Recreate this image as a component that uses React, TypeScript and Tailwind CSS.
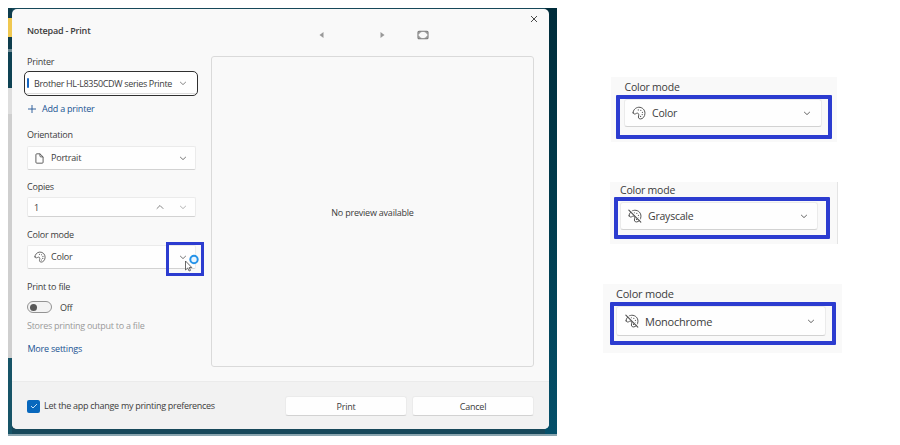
import type { ReactNode } from "react";

function Chevron({ up = false, className = "" }: { up?: boolean; className?: string }) {
  return (
    <svg viewBox="0 0 8 8" className={`h-2 w-2 shrink-0 ${className}`} fill="none" stroke="currentColor" strokeWidth="0.9" strokeLinecap="round" strokeLinejoin="round">
      <path d={up ? "M1 5.500 4 2.500 7 5.500" : "M1.400 3.200 4 5.600 6.600 3.200"} />
    </svg>
  );
}

function Palette({ off = false, className = "" }: { off?: boolean; className?: string }) {
  return (
    <svg viewBox="0 0 20 20" className={`shrink-0 text-[#505050] ${className}`} fill="none" stroke="currentColor" strokeWidth="1.400" strokeLinecap="round" strokeLinejoin="round">
      <path d="M1.600 9.800C1.200 6.200 5 2 9.600 1.800c5.200-.2 9 3.800 8.900 8.600 0 4.700-3.200 8.200-6.600 8.100-2.600-.1-3.200-2.200-2.500-4.300.6-1.900.3-3.200-.9-3.800-1.300-.6-2.200.2-3.400.8C3.500 11.800 1.800 11.300 1.600 9.800Z" />
      <g fill="currentColor" stroke="none">
        <circle cx="9" cy="5.600" r="0.900" />
        <circle cx="12.600" cy="6.200" r="0.900" />
        <circle cx="14.900" cy="9" r="0.900" />
        <circle cx="14.600" cy="12.300" r="0.900" />
        <circle cx="12.300" cy="14.900" r="0.900" />
      </g>
      {off && (
        <>
          <path d="M2.800 .8 19.300 17.300" stroke="#fdfdfd" strokeWidth="1.500" />
          <path d="M1.200 1.700 18.300 18.800" strokeWidth="1.600" />
        </>
      )}
    </svg>
  );
}

function Label({ children, className = "" }: { children: ReactNode; className?: string }) {
  return <div className={`flex h-4 items-center pb-px ${className}`}>{children}</div>;
}

const field = "flex items-center rounded-[2px] border border-[#ebebeb] border-b-[#d2d2d2] bg-[#fefefe]";

function Backdrop() {
  return (
    <div className="flex h-full w-full justify-between">
      <div className="flex w-1 flex-col">
        <div className="h-[10px] bg-[#0e3d4d]" />
        <div className="h-[19px] bg-[#f0c850]" />
        <div className="h-[12px] bg-[#0e3d4d]" />
        <div className="h-[3px] bg-[#6c8993]" />
        <div className="h-[36px] bg-[#0e4253]" />
        <div className="h-[26px] bg-[#dedede]" />
        <div className="h-[244px] bg-[#cfcfcf]" />
        <div className="flex-1 bg-[#175467]" />
      </div>
      <div className="w-3 bg-linear-to-b from-[#002c3a] via-[#003c4e] to-[#05506a]" />
    </div>
  );
}

function Settings() {
  return (
    <div className="w-[169px] shrink-0">
      <Label className="mt-[14px] font-semibold tracking-[-0.200px]">Notepad - Print</Label>
      <Label className="mt-[15px]">Printer</Label>
      <div className="mt-px -mr-[2px] -ml-[3px] h-[25px] rounded-[5px] border-[1.500px] border-[#303030] bg-white p-px">
        <div className="flex h-full items-center border-b border-[#dcdcdc] pr-[9px] pl-px">
          <span className="h-[10px] w-[2px] rounded bg-[#1565c0]" />
          <span className="ml-[5px] flex-1 pt-px whitespace-nowrap tracking-[-0.340px]">Brother HL-L8350CDW series Printe</span>
          <Chevron className="text-[#777]" />
        </div>
      </div>
      <Label className="mt-[5px] gap-[6px] text-[#205493]">
        <svg viewBox="0 0 8 8" className="ml-[1px] h-2 w-2" stroke="currentColor" strokeWidth="0.9">
          <path d="M4 0v8M0 4h8" />
        </svg>
        <span>Add a printer</span>
      </Label>
      <Label className="mt-[10px]">Orientation</Label>
      <div className={`${field} mt-[3px] h-6 pr-2 pl-[7px]`}>
        <svg viewBox="0 0 10 12" className="h-[11px] w-[9px] text-[#505050]" fill="none" stroke="currentColor" strokeWidth="1" strokeLinejoin="round">
          <path d="M2 .8h3.500L9 4.200v6q0 1-1 1H2q-1 0-1-1V1.800q0-1 1-1ZM5.500.8v2.400q0 1 1 1H9" />
        </svg>
        <span className="ml-[7px] flex-1 pb-px">Portrait</span>
        <Chevron className="text-[#666]" />
      </div>
      <Label className="mt-[9px]">Copies</Label>
      <div className={`${field} mt-[2px] h-5 border-b-[#9a9a9a] pr-2 pl-[6px]`}>
        <span className="flex-1 pt-px">1</span>
        <Chevron up className="mr-[15px] text-[#777]" />
        <Chevron className="text-[#aaa]" />
      </div>
      <Label className="mt-[10px]">Color mode</Label>
      <div className={`${field} relative mt-[2px] h-6 pr-2 pl-[6px]`}>
        <Palette className="h-3 w-3" />
        <span className="ml-[5px] flex-1 pb-px">Color</span>
        <Chevron className="text-[#666]" />
        <div className="absolute -top-[4px] left-[138px] h-[34px] w-[38px] border-3 border-[#2c3cd0]" />
        <svg viewBox="0 0 20 20" className="absolute top-[6px] left-[156px] h-5 w-5" fill="none">
          <path d="M1.500 9v9l2.200-2 1.400 3 1.400-.6-1.300-2.900h2.600Z" fill="#fff" stroke="#444" strokeWidth=".8" strokeLinejoin="round" />
          <circle cx="10" cy="7.500" r="3.700" fill="#e8f5ff" stroke="#2492e8" strokeWidth="2" />
        </svg>
      </div>
      <Label className="mt-[10px]">Print to file</Label>
      <div className="mt-1 flex h-4 items-center">
        <span className="flex h-3 w-[25px] items-center rounded-full border border-[#939393] bg-[#f3f3f3] pl-[1.500px]">
          <span className="h-[7px] w-[7px] rounded-full bg-[#595959]" />
        </span>
        <span className="ml-2">Off</span>
      </div>
      <Label className="mt-[3px] text-[#999]"><span className="whitespace-nowrap tracking-[-0.260px]">Stores printing output to a file</span></Label>
      <Label className="mt-[7px] pl-[0.500px] text-[#205493]">More settings</Label>
    </div>
  );
}

function Preview() {
  return (
    <div className="ml-[15px] flex w-[323px] shrink-0 flex-col">
      <div className="flex h-[47px] items-start">
        <div className="flex pt-[21px] pl-[108px]">
          <svg viewBox="0 0 5 6" className="mt-[2px] h-[6px] w-[5px] fill-[#999]"><path d="M4.500 0v6L.5 3Z" /></svg>
          <svg viewBox="0 0 5 6" className="mt-[2px] ml-[56px] h-[6px] w-[5px] fill-[#999]"><path d="M.5 0v6l4-3Z" /></svg>
          <svg viewBox="0 0 12 10" className="ml-[32px] h-[10px] w-3" fill="none" stroke="#777">
            <rect x="1" y="1.200" width="10" height="7.600" rx="1" strokeWidth="1.100" />
            <path d="M2 4V2h2.200M7.800 2H10v2M10 6v2H7.800M4.200 8H2V6" strokeWidth="0.900" />
          </svg>
        </div>
        <svg viewBox="0 0 8 8" className="mt-[6px] -mr-1 ml-auto h-2 w-2" stroke="#4a4a4a" strokeWidth="1"><path d="m1 1 6 6M7 1 1 7" /></svg>
      </div>
      <div className="flex h-[311px] items-center justify-center rounded-[3px] border border-[#dadada] bg-[#f9f9f9]">
        <span className="pt-px">No preview available</span>
      </div>
    </div>
  );
}

function Dialog() {
  return (
    <div className="absolute top-px left-[4px] flex h-[420px] w-[537px] flex-col overflow-hidden rounded-[5px] bg-[#f9f9f9]">
      <div className="flex h-[373px] border-b border-[#ebebeb] pl-[15px]">
        <Settings />
        <Preview />
      </div>
      <div className="flex flex-1 items-center bg-[#f2f2f2] pt-px pr-[15px] pl-[15px]">
        <span className="flex h-[13px] w-[13px] items-center justify-center rounded-[2px] bg-[#0868bd]">
          <svg viewBox="0 0 8 8" className="h-2 w-2" fill="none" stroke="#d9edff" strokeWidth="0.9"><path d="m1 4 2 2 4-4" /></svg>
        </span>
        <span className="ml-1 flex-1 pb-px tracking-[-0.290px]">Let the app change my printing preferences</span>
        <div className={`${field} h-5 w-[122px] justify-center rounded-[3px]`}>Print</div>
        <div className={`${field} ml-[5px] h-5 w-[122px] justify-center rounded-[3px]`}>Cancel</div>
      </div>
    </div>
  );
}

type CardProps = { mode: string; off?: boolean; panel: string; label: string; ring: string; select: string };

function ModeCard({ mode, off, panel, label, ring, select }: CardProps) {
  return (
    <div className={`bg-[#f9f9f9] ${panel}`}>
      <div className={`flex items-center ${label}`}>Color mode</div>
      <div className={`rounded-[1px] border-4 border-[#2c3cd0] ${ring}`}>
        <div className={`${field} rounded-[3px] ${select}`}>
          <Palette off={off} className="h-[14px] w-[14px]" />
          <span className="ml-[6px] flex-1">{mode}</span>
          <Chevron className="text-[#555]" />
        </div>
      </div>
    </div>
  );
}

export default function App() {
  return (
    <div className="flex h-[445px] w-[900px] overflow-hidden bg-white pt-2 pl-2 font-['Open_Sans','Noto_Sans',sans-serif] text-[9px] leading-none tracking-[-0.220px] text-[#3c3c3c]">
      <div className="relative h-[428px] w-[549px] shrink-0 border-b-2 border-[#8aa5af] bg-[#17485a]">
        <Backdrop />
        <Dialog />
      </div>
      <div className="ml-[46px] pt-[69px]">
        <ModeCard
          mode="Color"
          panel="ml-2 h-[65px] w-[226px] text-[10.500px]"
          label="h-[18px] pl-[13.500px] pt-[2px]"
          ring="ml-[5px] h-[44px] w-[216px]"
          select="ml-1 h-7 w-[198px] pl-[7px] pr-[10px]"
        />
        <ModeCard
          mode="Grayscale"
          off
          panel="ml-[7px] mt-10 h-[62px] w-[228px] border-r border-[#e4e4e4] text-[10.500px]"
          label="h-[15px] pl-[10px] pt-[1px]"
          ring="ml-1 h-[42px] w-[216px]"
          select="ml-[2px] mt-px h-7 w-[198px] pl-[7px] pr-[9px]"
        />
        <ModeCard
          mode="Monochrome"
          off
          panel="mt-10 h-[69px] w-[239px] text-[11px]"
          label="h-[18px] pl-[13px] pt-px"
          ring="ml-[7px] h-[43px] w-[226px]"
          select="ml-[2px] h-[30px] w-[210px] pl-2 pr-[10px]"
        />
      </div>
    </div>
  );
}
